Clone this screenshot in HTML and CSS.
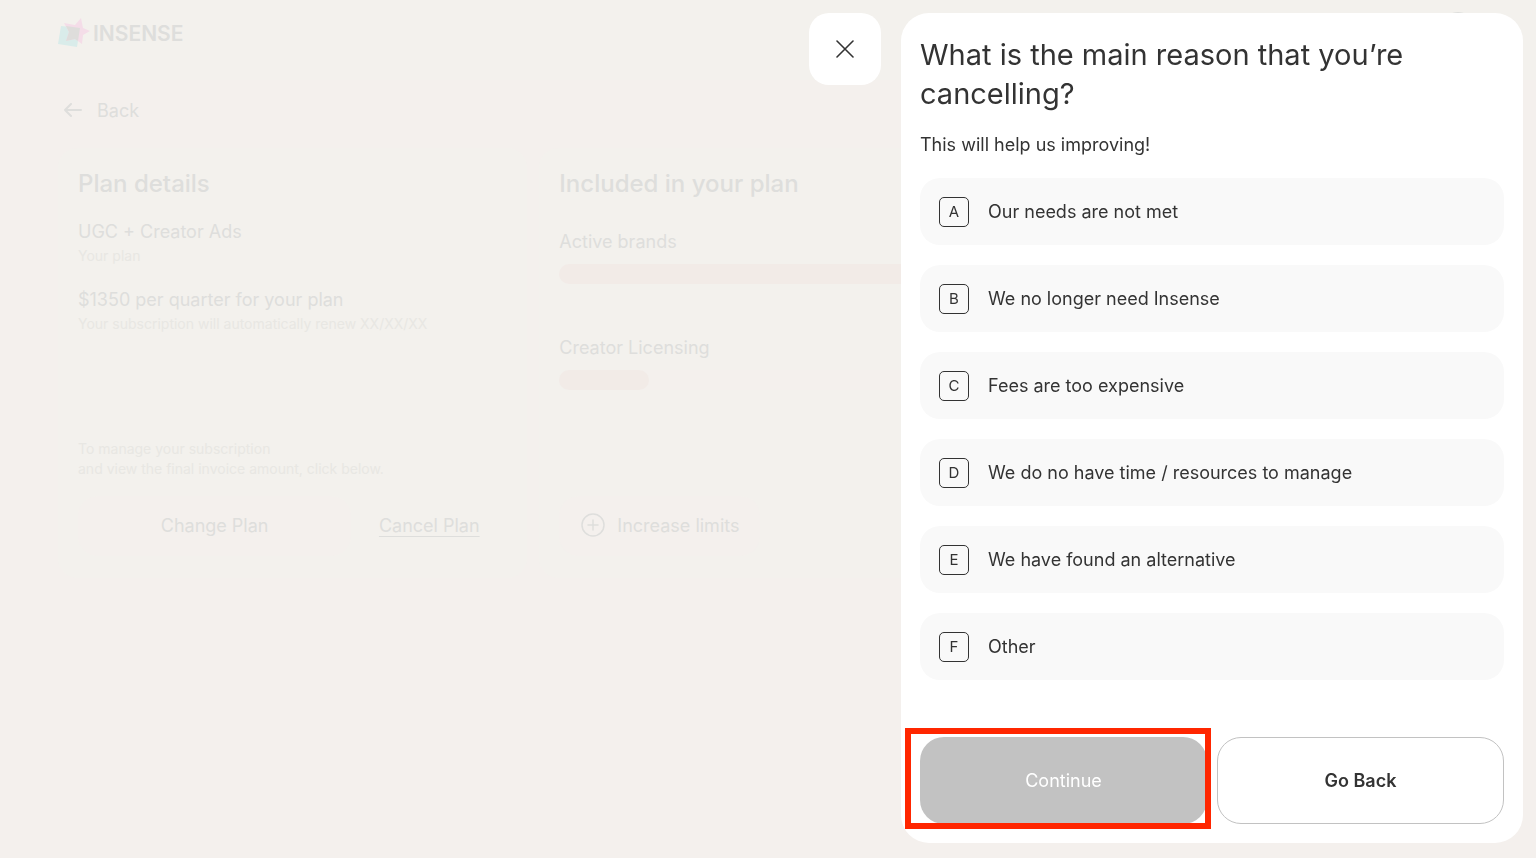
FILE: index.html
```html
<!DOCTYPE html>
<html lang="en">
<head>
  <meta charset="UTF-8">
  <title>Insense - Cancel plan</title>
  <link rel="stylesheet" href="styles.css">
</head>
<body>
  <div class="page">
    <header class="header">
      <a class="logo" href="#">
        <svg class="logo-mark" width="33" height="32" viewBox="0 0 33 32">
          <path fill="#d9ecea" d="M3 9l19 2-3 19-19-3z"/>
          <path fill="#f4dde8" d="M23 1l2 10 7 3-7 4-1 9-7-5-9 2 3-9-5-9 11 2z"/>
          <path fill="#dedddb" d="M8 9l14 2-2 13-3-2-9 2 3-9z"/>
        </svg>
        <span>INSENSE</span>
      </a>
      <span class="avatar"></span>
    </header>

    <main class="content">
      <a class="back" href="#">
        <svg width="20" height="16" viewBox="0 0 20 16" fill="none" stroke="currentColor" stroke-width="2" stroke-linecap="round" stroke-linejoin="round">
          <path d="M18 7H2M8 1L2 7l6 6"/>
        </svg>
        <span>Back</span>
      </a>

      <div class="cards">
        <section class="card">
          <h2>Plan details</h2>
          <p class="plan-name">UGC + Creator Ads</p>
          <p class="note">Your plan</p>
          <p class="plan-price">$1350 per quarter for your plan</p>
          <p class="note">Your subscription will automatically renew XX/XX/XX</p>
          <div class="card-bottom">
            <p class="note">To manage your subscription<br>and view the final invoice amount, click below.</p>
            <div class="card-actions">
              <button class="soft-button" type="button">Change Plan</button>
              <a class="cancel-link" href="#">Cancel Plan</a>
            </div>
          </div>
        </section>

        <section class="card">
          <h2>Included in your plan</h2>
          <p class="limit-name">Active brands</p>
          <div class="bar"><div class="bar-fill" style="width: 100%"></div></div>
          <p class="limit-name">Creator Licensing</p>
          <div class="bar"><div class="bar-fill" style="width: 10%"></div></div>
          <div class="card-bottom">
            <button class="soft-button increase" type="button">
              <svg width="26" height="26" viewBox="0 0 26 26" fill="none" stroke="currentColor" stroke-width="1.5" stroke-linecap="round">
                <circle cx="13" cy="12" r="11"/>
                <path d="M8 12h10M13 7v10"/>
              </svg>
              <span>Increase limits</span>
            </button>
          </div>
        </section>
      </div>
    </main>
  </div>

  <div class="overlay">
    <button class="close" type="button" aria-label="Close">
      <svg width="18" height="18" viewBox="0 0 18 18" fill="none" stroke="currentColor" stroke-width="1.6" stroke-linecap="round">
        <path d="M1 1l16 16M17 1L1 17"/>
      </svg>
    </button>

    <form class="drawer">
      <h1>What is the main reason that you’re cancelling?</h1>
      <p class="subtitle">This will help us improving!</p>

      <div class="options">
        <label class="option"><input type="radio" name="reason" value="needs"><span class="key">A</span><span class="option-text">Our needs are not met</span></label>
        <label class="option"><input type="radio" name="reason" value="no-need"><span class="key">B</span><span class="option-text">We no longer need Insense</span></label>
        <label class="option"><input type="radio" name="reason" value="fees"><span class="key">C</span><span class="option-text">Fees are too expensive</span></label>
        <label class="option"><input type="radio" name="reason" value="time"><span class="key">D</span><span class="option-text">We do no have time / resources to manage</span></label>
        <label class="option"><input type="radio" name="reason" value="alternative"><span class="key">E</span><span class="option-text">We have found an alternative</span></label>
        <label class="option"><input type="radio" name="reason" value="other"><span class="key">F</span><span class="option-text">Other</span></label>
      </div>

      <div class="actions">
        <div class="highlight">
          <button class="continue" type="submit" disabled>Continue</button>
        </div>
        <button class="go-back" type="button">Go Back</button>
      </div>
    </form>
  </div>
</body>
</html>
```
FILE: styles.css
```css
* { box-sizing: border-box; }
body { margin: 0; background: #f4f0ed; color: #dededc; font-family: Inter, "Liberation Sans", sans-serif; font-size: 18px; line-height: 24px; overflow: hidden; }
h1, h2, p { margin: 0; font-weight: 400; }
a { color: inherit; text-decoration: none; }
button { font: inherit; color: inherit; border: none; cursor: pointer; }
svg { display: block; flex: none; }

/* page behind the drawer */
.header { display: flex; justify-content: space-between; height: 80px; padding: 12px 58px 0; background: #f3f1ed; }
.logo { display: flex; gap: 2px; height: 40px; padding-top: 5px; font-size: 21px; font-weight: 600; line-height: 34px; }
.avatar { width: 40px; height: 40px; border-radius: 50%; background: #dededc; }
.content { padding: 19px 58px 0; }
.back { display: inline-flex; align-items: center; gap: 14px; padding-left: 5px; }
.cards { display: grid; grid-template-columns: 1fr 2fr; gap: 12px; margin-top: 23px; }
.card { display: flex; flex-direction: column; min-height: 430px; padding: 22px 20px; border-radius: 20px; background: #f3f1ed; }
.card h2 { margin-bottom: 22px; font-size: 24px; font-weight: 500; line-height: 28px; }
.note { color: #e8e7e3; font-size: 14px; line-height: 20px; }
.plan-name, .plan-price { margin-bottom: 2px; }
.plan-price { margin-top: 22px; }
.limit-name { margin-top: 10px; }
.bar { height: 20px; margin: 10px 0 42px; border-radius: 10px; background: #f4f0ed; }
.bar-fill { height: 20px; border-radius: 10px; background: #f2ebe7; }
.card-bottom { margin-top: auto; }
.card-actions { display: grid; grid-template-columns: 7fr 4fr; margin-top: 17px; text-align: center; }
.soft-button { height: 60px; border-radius: 20px; background: #f4f0ed; }
.cancel-link { justify-self: center; align-self: center; text-decoration: underline 1px; text-underline-offset: 4px; }
.increase { display: flex; align-items: center; gap: 11px; padding: 0 21px; }

/* drawer */
.overlay { position: fixed; inset: 0; display: flex; justify-content: flex-end; align-items: flex-start; gap: 20px; padding: 13px 13px 15px; color: #333; }
.close { display: grid; place-items: center; flex: none; width: 72px; height: 72px; border-radius: 20px; background: #fff; }
.drawer { display: flex; flex-direction: column; width: 100%; max-width: 622px; height: 100%; padding: 22px 19px 19px; border-radius: 28px; background: #fff; overflow: auto; }
.drawer h1 { font-size: 29px; line-height: 39px; }
.subtitle { margin-top: 20px; }
.options { display: grid; gap: 20px; margin-top: 21px; }
.option { display: grid; grid-template-columns: 30px 1fr; align-items: center; column-gap: 19px; height: 67px; padding: 0 19px; border-radius: 20px; background: #f9f9f9; cursor: pointer; }
.option input { grid-area: 1 / 1; appearance: none; width: 30px; height: 30px; margin: 0; border: 1px solid #333; border-radius: 5px; }
.option input:checked { background: #ddd; }
.key { grid-area: 1 / 1; font-size: 15px; text-align: center; }
.actions { display: grid; grid-template-columns: 1fr 1fr; gap: 10px; margin-top: auto; }
.actions button { width: 100%; height: 87px; border-radius: 24px; }
.highlight { position: relative; }
.highlight::after { content: ""; position: absolute; inset: -9px -4px -5px -15px; border: 6px solid #ff2600; pointer-events: none; }
.continue { background: #c2c2c2; color: #fff; }
.go-back { border: 1px solid #c2c2c2; background: #fff; font-weight: 600; }
```
